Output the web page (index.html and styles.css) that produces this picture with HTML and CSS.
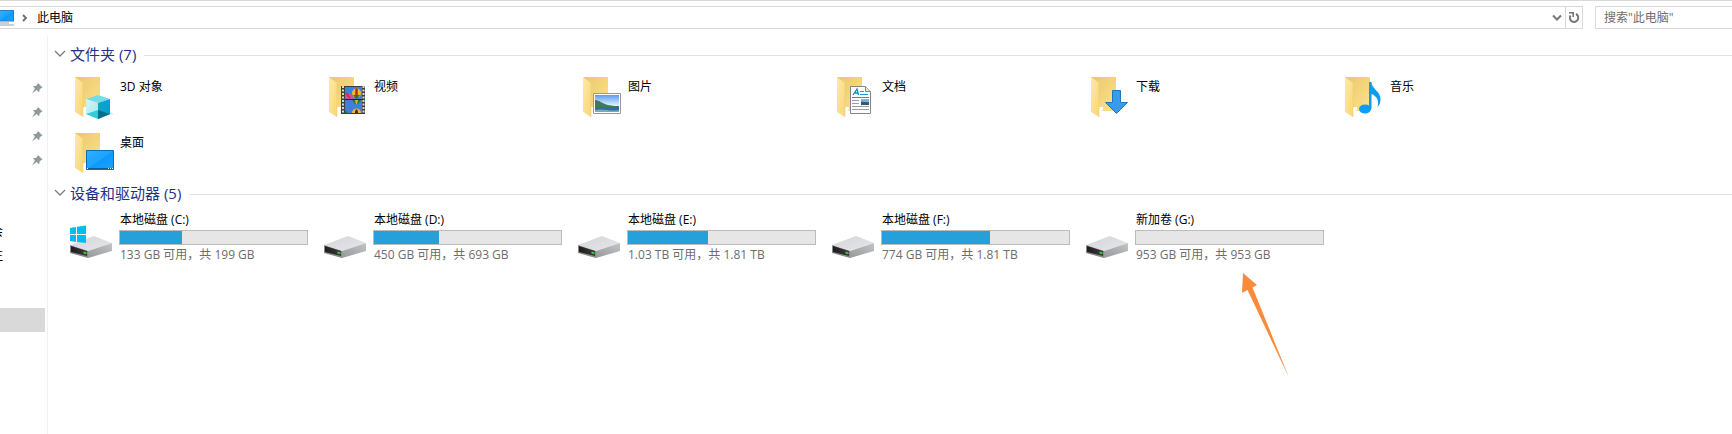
FILE: index.html
```html
<!DOCTYPE html>
<html lang="zh-CN">
  <head>
    <meta charset="UTF-8" />
    <meta name="viewport" content="width=device-width, initial-scale=1.0" />
    <title>此电脑</title>
    <link rel="stylesheet" href="styles.css">
  </head>
  <body>
    <!-- shared shapes -->
    <svg class="defs" aria-hidden="true">
      <defs>
        <linearGradient id="gBack" x1="0" y1="0" x2="1" y2="1">
          <stop offset="0" stop-color="#e8c86c" />
          <stop offset="1" stop-color="#ffe28c" />
        </linearGradient>
        <linearGradient id="gFront" x1="0" y1="0" x2="1" y2="1">
          <stop offset="0" stop-color="#ffe9a6" />
          <stop offset="1" stop-color="#f8d676" />
        </linearGradient>
        <linearGradient id="gBlue" x1="0" y1="0" x2="1" y2="1">
          <stop offset="0" stop-color="#2fb0ff" />
          <stop offset="0.5" stop-color="#1ca2ff" />
          <stop offset="0.52" stop-color="#0c98fc" />
          <stop offset="1" stop-color="#1ba4ff" />
        </linearGradient>
        <linearGradient id="gTop" x1="0" y1="0" x2="1" y2="1">
          <stop offset="0" stop-color="#d4d5d8" />
          <stop offset="1" stop-color="#e6e7ea" />
        </linearGradient>
        <linearGradient id="gSide" x1="0" y1="1" x2="1" y2="0">
          <stop offset="0" stop-color="#97989a" />
          <stop offset="1" stop-color="#c3c4c6" />
        </linearGradient>
        <linearGradient id="gFace" x1="0" y1="0" x2="1" y2="0">
          <stop offset="0" stop-color="#1c1c1c" />
          <stop offset="1" stop-color="#3c3c3c" />
        </linearGradient>
        <linearGradient id="gSky" x1="0" y1="0" x2="0" y2="1">
          <stop offset="0" stop-color="#5c9df0" />
          <stop offset="0.6" stop-color="#d8efff" />
        </linearGradient>
        <linearGradient id="gCubeL" x1="0" y1="0" x2="1" y2="1">
          <stop offset="0" stop-color="#d5f5f7" />
          <stop offset="1" stop-color="#a6e6ec" />
        </linearGradient>
        <linearGradient id="gCubeR" x1="0" y1="0" x2="1" y2="0">
          <stop offset="0" stop-color="#10a8bd" />
          <stop offset="1" stop-color="#009fe0" />
        </linearGradient>
      </defs>
      <symbol id="folder" viewBox="0 0 42 44">
        <path d="M1 1H26V35H9L1 30z" fill="url(#gBack)" />
        <path d="M9 36l4-2v-3h-4z" fill="#fff" />
        <path d="M1 1l8 6v34L1 36z" fill="url(#gFront)" />
        <path d="M9 7v34" stroke="#efcd72" stroke-width="0.6" />
      </symbol>
      <symbol id="drive" viewBox="0 0 44 34">
        <path d="M1 20l18 10 24-9v2L19 33 2 28z" fill="#000" opacity="0.08" />
        <path d="M1 20L25 11l18 7-24 8z" fill="url(#gTop)" />
        <path d="M19 26l24-8v8L19 33z" fill="url(#gSide)" />
        <path d="M1 20l18 6v7L1 28z" fill="#88898b" />
        <path d="M2 21l16 5v5L2 27z" fill="url(#gFace)" />
        <path d="M14.500 26.500l3 1v1.500l-3-.5z" fill="#2fe02f" />
      </symbol>
      <symbol id="pin" viewBox="0 0 12 12">
        <path d="M7 1l4.500 4.500-1.200.4L8.500 7.500l-.2 2.700L5.500 8 1 11.500 4 6.500 1.700 4.200l3.100-.2L6.500 2.200z" fill="#8d989f" />
      </symbol>
      <symbol id="chevron" viewBox="0 0 12 8">
        <path d="M1 1l5 5 5-5" fill="none" stroke="#7c7c7c" stroke-width="1.300" />
      </symbol>
    </svg>

    <header class="toolbar">
      <div class="address">
        <svg class="pc-icon" width="14" height="16" viewBox="0 0 14 16">
          <path d="M0 0h14v11.500H0z" fill="#2b7fc0" />
          <path d="M0 1h13v9.500H0z" fill="url(#gBlue)" />
          <path d="M0 12.500h9v1H0zM0 14.500h14v1H0z" fill="#8fa0b4" />
        </svg>
        <svg class="crumb-arrow" width="6" height="8" viewBox="0 0 6 8">
          <path d="M1 1l3 3-3 3" fill="none" stroke="#6e6e6e" stroke-width="1.800" />
        </svg>
        <input class="path" type="text" value="此电脑" aria-label="地址" />
        <button class="history" type="button" aria-label="以前的位置">
          <svg width="10" height="8" viewBox="0 0 10 8"><path d="M1 1.500l4 4 4-4" fill="none" stroke="#777" stroke-width="2" /></svg>
        </button>
        <button class="refresh" type="button" aria-label="刷新">
          <svg width="12" height="13" viewBox="0 0 12 13">
            <path d="M2.500 4.500A4.200 4.200 0 1 0 8 3" fill="none" stroke="#777" stroke-width="2" />
            <path d="M1 1.800h4.200v4.200" fill="none" stroke="#777" stroke-width="1.600" />
          </svg>
        </button>
      </div>
      <input class="search" type="search" placeholder="搜索&quot;此电脑&quot;" aria-label="搜索" />
    </header>

    <div class="explorer">
      <nav class="sidebar">
        <a class="nav-row" href="#" aria-label="桌面"><svg class="pin"><use href="#pin" /></svg></a>
        <a class="nav-row" href="#" aria-label="下载"><svg class="pin"><use href="#pin" /></svg></a>
        <a class="nav-row" href="#" aria-label="文档"><svg class="pin"><use href="#pin" /></svg></a>
        <a class="nav-row" href="#" aria-label="图片"><svg class="pin"><use href="#pin" /></svg></a>
        <a class="nav-row" href="#" aria-label="音乐"></a>
        <a class="nav-row" href="#" aria-label="视频"></a>
        <a class="nav-row" href="#"><span class="nav-name">会</span></a>
        <a class="nav-row" href="#"><span class="nav-name">注</span></a>
        <a class="nav-row selected" href="#" aria-label="此电脑"></a>
      </nav>

      <main class="content">
        <section class="group">
          <h2 class="group-head">
            <button class="group-toggle" type="button"><svg class="chevron"><use href="#chevron" /></svg>文件夹 (7)</button>
          </h2>
          <div class="items">
            <a class="folder" href="#">
              <svg class="folder-icon" viewBox="0 0 42 44">
                <use href="#folder" />
                <path d="M30 41l10-3-5-3z" fill="#000" opacity="0.1" />
                <path d="M24 19l12 4-12 4-12-4z" fill="#74dce6" />
                <path d="M12 23l12 4v16l-12-5z" fill="url(#gCubeL)" />
                <path d="M24 27l12-4v15l-12 5z" fill="url(#gCubeR)" />
                <path d="M12 38l12-4 0 9z" fill="#35c9da" />
                <path d="M24 34l12 4-12 5z" fill="#046f8b" />
              </svg>
              <span class="name">3D 对象</span>
            </a>
            <a class="folder" href="#">
              <svg class="folder-icon" viewBox="0 0 42 44">
                <use href="#folder" />
                <path d="M13 10h24v28H13z" fill="#3e3e3e" />
                <path d="M15 10v28M35.500 10v28" stroke="#d8d8d8" stroke-width="2" stroke-dasharray="2 1.500" />
                <path d="M17 11h17v12H17zM17 24h17v13H17z" fill="#3f7fdc" />
                <path d="M17 19l5-2 5 6H17z" fill="#c94fa5" />
                <path d="M18 17l4 5" stroke="#e22c2c" stroke-width="2" />
                <ellipse cx="28.500" cy="17" rx="4.500" ry="4.500" fill="#eebb20" />
                <path d="M28.500 12.500v9" stroke="#c22323" stroke-width="2.500" />
                <path d="M25 19l3.500 4 3.500-4z" fill="#2b7237" />
                <path d="M24 24h9l-3 4h-3z" fill="#2b7237" />
                <path d="M27 24h3l-1 4h-1z" fill="#e2b522" />
                <path d="M24 37c0-6 9-6 9 0z" fill="#eebb20" />
                <path d="M27 37c0-5 3-5 3 0z" fill="#5b2525" />
                <path d="M17 34l3 3h-3z" fill="#2b7237" />
                <path d="M17 23.500h17" stroke="#222" />
              </svg>
              <span class="name">视频</span>
            </a>
            <a class="folder" href="#">
              <svg class="folder-icon" viewBox="0 0 42 44">
                <use href="#folder" />
                <path d="M11.500 17.500h27v20h-27z" fill="#fff" stroke="#9a9a9a" />
                <path d="M13 19h24v17H13z" fill="url(#gSky)" />
                <path d="M13 24c4 0 8 4 13 5s8 1 11 1v2H13z" fill="#417a58" />
                <path d="M13 31h24v5H13z" fill="#2e6f9f" />
                <path d="M13 34c8-2 16 2 24 0v2H13z" fill="#79a9c2" />
              </svg>
              <span class="name">图片</span>
            </a>
            <a class="folder" href="#">
              <svg class="folder-icon" viewBox="0 0 42 44">
                <use href="#folder" />
                <path d="M14.500 10.500h15l5 5v22h-20z" fill="#fafcfd" stroke="#858585" />
                <path d="M29.500 10.500v5h5" fill="#dfe3e6" stroke="#858585" />
                <path d="M17 19l4-6 1.500 6M19 17h3" fill="none" stroke="#1687cf" stroke-width="1.300" />
                <path d="M24 15.500h4M24 18.500h8M16 21.500h17" stroke="#1b96d8" />
                <path d="M16 24.500h7M16 27.500h7M16 30.500h17M16 33.500h17" stroke="#9b9b9b" />
                <path d="M25 23h8v6h-8z" fill="#78b3e6" />
                <path d="M25 26c3-1 5 1 8 0v3h-8z" fill="#31586b" />
              </svg>
              <span class="name">文档</span>
            </a>
            <a class="folder" href="#">
              <svg class="folder-icon" viewBox="0 0 42 44">
                <use href="#folder" />
                <path d="M22.500 14.500h8v12h7l-11 11-11-11h7z" fill="#3a9bea" stroke="#2175bd" />
              </svg>
              <span class="name">下载</span>
            </a>
            <a class="folder" href="#">
              <svg class="folder-icon" viewBox="0 0 42 44">
                <use href="#folder" />
                <ellipse cx="21" cy="33" rx="6" ry="4.500" fill="#0c9cf5" />
                <path d="M25 6h2.500c0 7 9 9 9 17 0 4-1 6-3 8 2-7-1-11-6-13v15H25z" fill="#0c9cf5" />
              </svg>
              <span class="name">音乐</span>
            </a>
            <a class="folder" href="#">
              <svg class="folder-icon" viewBox="0 0 42 44">
                <use href="#folder" />
                <path d="M12.500 18.500h27v19h-27z" fill="url(#gBlue)" stroke="#0b6eb0" />
                <path d="M13 36.500h26" stroke="#0a5c9c" />
                <path d="M13 36.500h1M34 36.500h1M36 36.500h1M38 36.500h1" stroke="#fff" />
              </svg>
              <span class="name">桌面</span>
            </a>
          </div>
        </section>

        <section class="group">
          <h2 class="group-head">
            <button class="group-toggle" type="button"><svg class="chevron"><use href="#chevron" /></svg>设备和驱动器 (5)</button>
          </h2>
          <div class="items">
            <a class="drive" href="#">
              <svg class="drive-icon" viewBox="0 0 44 44">
                <use href="#drive" y="10" width="44" height="34" />
                <path d="M1 13l6-1v7H1zM8 11.800l9-1.300V19H8zM1 20h6v7l-6-1zM8 20h9v8l-9-1z" fill="#00bcf2" />
              </svg>
              <span class="drive-info">
                <span class="name">本地磁盘 (C:)</span>
                <progress class="usage" value="33" max="100" aria-label="C: 已用空间"></progress>
                <span class="space">133 GB 可用，共 199 GB</span>
              </span>
            </a>
            <a class="drive" href="#">
              <svg class="drive-icon" viewBox="0 0 44 44"><use href="#drive" y="10" width="44" height="34" /></svg>
              <span class="drive-info">
                <span class="name">本地磁盘 (D:)</span>
                <progress class="usage" value="35" max="100" aria-label="D: 已用空间"></progress>
                <span class="space">450 GB 可用，共 693 GB</span>
              </span>
            </a>
            <a class="drive" href="#">
              <svg class="drive-icon" viewBox="0 0 44 44"><use href="#drive" y="10" width="44" height="34" /></svg>
              <span class="drive-info">
                <span class="name">本地磁盘 (E:)</span>
                <progress class="usage" value="43" max="100" aria-label="E: 已用空间"></progress>
                <span class="space">1.03 TB 可用，共 1.81 TB</span>
              </span>
            </a>
            <a class="drive" href="#">
              <svg class="drive-icon" viewBox="0 0 44 44"><use href="#drive" y="10" width="44" height="34" /></svg>
              <span class="drive-info">
                <span class="name">本地磁盘 (F:)</span>
                <progress class="usage" value="58" max="100" aria-label="F: 已用空间"></progress>
                <span class="space">774 GB 可用，共 1.81 TB</span>
              </span>
            </a>
            <a class="drive" href="#">
              <svg class="drive-icon" viewBox="0 0 44 44"><use href="#drive" y="10" width="44" height="34" /></svg>
              <span class="drive-info">
                <span class="name">新加卷 (G:)</span>
                <progress class="usage" value="0" max="100" aria-label="G: 已用空间"></progress>
                <span class="space">953 GB 可用，共 953 GB</span>
              </span>
              <!-- arrow pointing at the new volume -->
              <svg class="pointer" width="50" height="106" viewBox="0 0 50 106">
                <path d="M3 0l14 12-4.500 2.500L49 104.500 7.500 17 2 20z" fill="#f98b3a" />
              </svg>
            </a>
          </div>
        </section>
      </main>
    </div>
  </body>
</html>
```
FILE: styles.css
```css
* {
  box-sizing: border-box;
}
body {
  margin: 0;
  background: #fff;
  color: #000;
  font-family: "Open Sans", "Noto Sans CJK SC", sans-serif;
  font-size: 12px;
  line-height: 16px;
  overflow-x: hidden;
}
a {
  color: inherit;
  text-decoration: none;
}
button,
input {
  padding: 0;
  border: 0;
  background: none;
  font: inherit;
}
svg {
  display: block;
  flex: none;
}
.defs {
  position: absolute;
  width: 0;
  height: 0;
}

/* address bar */
.toolbar {
  display: flex;
  gap: 12px;
  height: 36px;
  padding-top: 5px;
  border-top: 1px solid #d9d9d9;
}
.address {
  display: flex;
  flex: 1;
  align-items: center;
  height: 23px;
  border: 1px solid #d9d9d9;
  border-left: 0;
}
.crumb-arrow {
  margin: 0 9px 0 8px;
}
.path {
  flex: 1;
  min-width: 0;
  height: 21px;
  padding-bottom: 2px;
}
.history,
.refresh {
  display: flex;
  align-items: center;
  justify-content: center;
  width: 16px;
  height: 21px;
}
.refresh {
  width: 17px;
  border-left: 1px solid #d9d9d9;
}
.search {
  width: 137px;
  height: 23px;
  padding-left: 8px;
  border: 1px solid #d9d9d9;
  border-right: 0;
}
.search::placeholder {
  color: #6d6d6d;
}

/* panes */
.explorer {
  display: flex;
  min-height: calc(100vh - 36px);
}
.sidebar {
  width: 48px;
  flex: none;
  padding-top: 40px;
  border-right: 1px solid #f2f2f2;
}
.nav-row {
  display: flex;
  align-items: center;
  width: 45px;
  height: 24px;
}
.nav-row.selected {
  margin-top: 40px;
  background: #d9d9d9;
}
.pin {
  width: 12px;
  height: 12px;
  margin-left: 31px;
}
.nav-name {
  display: flex;
  justify-content: flex-end;
  width: 3px;
  overflow: hidden;
}
.content {
  flex: 1;
  min-width: 0;
  padding: 8px 0 0 6px;
}

/* groups */
.group + .group {
  margin-top: 5px;
}
.group-head {
  display: flex;
  align-items: center;
  gap: 8px;
  margin: 0;
  font-size: 15px;
  font-weight: normal;
  line-height: 20px;
}
.group-head::after {
  content: "";
  flex: 1;
  height: 1px;
  background: #e2e2e2;
}
.group-toggle {
  display: flex;
  align-items: center;
  gap: 4px;
  padding-bottom: 2px;
  color: #1e3287;
}
.chevron {
  width: 12px;
  height: 8px;
}
.items {
  display: grid;
  grid-template-columns: repeat(auto-fill, 254px);
  padding-left: 15px;
}
.folder {
  display: flex;
  gap: 4px;
  height: 56px;
  padding: 10px 0 0 5px;
}
.folder-icon {
  width: 42px;
  height: 44px;
}
.folder .name {
  padding-top: 3px;
}
.drive {
  position: relative;
  display: flex;
  gap: 6px;
  padding-top: 7px;
}
.drive-icon {
  width: 44px;
  height: 44px;
  margin-top: 3px;
}
.drive-info {
  display: flex;
  flex-direction: column;
  width: 189px;
}
.drive-info .name,
.space {
  padding-left: 1px;
}
.usage {
  appearance: none;
  -webkit-appearance: none;
  width: 100%;
  height: 15px;
  margin: 2px 0;
  border: 1px solid #bcbcbc;
  background: #e6e6e6;
}
.usage::-webkit-progress-bar {
  background: #e6e6e6;
}
.usage::-webkit-progress-value {
  background: #26a0da;
}
.space {
  color: #6d6d6d;
}
.pointer {
  position: absolute;
  top: 68px;
  left: 155px;
}
```
